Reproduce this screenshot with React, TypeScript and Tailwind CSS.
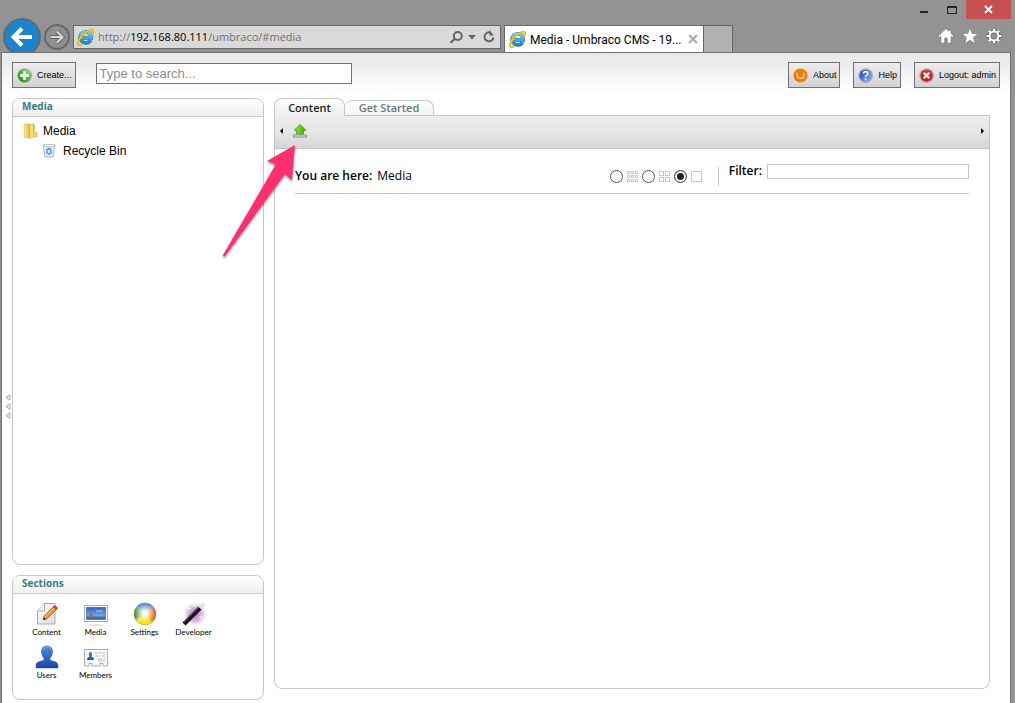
import React from 'react';

const ui = "font-['Open_Sans',sans-serif]";
const chrome = "font-['Roboto',sans-serif]";
const caption = "font-['Lato',sans-serif]";
const arial = "font-['Liberation_Sans',Arial,sans-serif]";

function Defs() {
  return (
    <svg width="0" height="0" className="absolute" aria-hidden="true">
      <defs>
        <linearGradient id="folder" x1="0" x2="1"><stop offset="0" stopColor="#fdf0a0" /><stop offset="1" stopColor="#e2ba34" /></linearGradient>
        <linearGradient id="green" x1="1" y1="0" x2="0" y2="1"><stop offset="0" stopColor="#a9dfa0" /><stop offset=".5" stopColor="#3fba2a" /><stop offset="1" stopColor="#0f8f0c" /></linearGradient>
        <linearGradient id="blue" x1="0" x2="1" y2=".8"><stop offset="0" stopColor="#1c3fb0" /><stop offset="1" stopColor="#7fa8ff" /></linearGradient>
        <radialGradient id="red" cx=".5" cy=".4"><stop offset="0" stopColor="#ff4a3a" /><stop offset="1" stopColor="#d90f12" /></radialGradient>
        <linearGradient id="silver" x2="1" y2="1"><stop offset="0" stopColor="#c9c9c9" /><stop offset="1" stopColor="#9c9c9c" /></linearGradient>
        <linearGradient id="ieblue" y2="1" x2="0"><stop offset="0" stopColor="#7fd0f8" /><stop offset="1" stopColor="#1c86d2" /></linearGradient>
        <linearGradient id="person" y2="1" x2="0"><stop offset="0" stopColor="#4f8bdd" /><stop offset="1" stopColor="#1c44a6" /></linearGradient>
        <linearGradient id="arrowup" x2="1"><stop offset="0" stopColor="#8ff01c" /><stop offset="1" stopColor="#35ad05" /></linearGradient>
        <linearGradient id="screen" y2="1" x2="0"><stop offset="0" stopColor="#2f66bd" /><stop offset="1" stopColor="#9cc3e8" /></linearGradient>
        <linearGradient id="paper" x2="1" y2="1"><stop offset="0" stopColor="#ffffff" /><stop offset="1" stopColor="#dcdcdc" /></linearGradient>
        <radialGradient id="centre"><stop offset="0" stopColor="#fff" /><stop offset=".3" stopColor="#fff" stopOpacity=".85" /><stop offset="1" stopColor="#fff" stopOpacity="0" /></radialGradient>
        <radialGradient id="purple"><stop offset="0" stopColor="#b37abf" /><stop offset=".6" stopColor="#cfa3da" stopOpacity=".8" /><stop offset="1" stopColor="#e8d4f0" stopOpacity="0" /></radialGradient>
        <clipPath id="ball"><circle cx="12" cy="12" r="11" /></clipPath>
        <filter id="soft" x="-20%" y="-20%" width="140%" height="140%"><feGaussianBlur stdDeviation="1.6" /></filter>
      </defs>
    </svg>
  );
}

function IeLogo() {
  return (
    <svg width="17" height="17" viewBox="0 0 17 17" className="shrink-0" aria-hidden="true">
      <path d="M13.6 11.2A5.6 5.6 0 1 1 14.3 8.9H4.5" fill="none" stroke="#1b78bd" strokeWidth="3.6" />
      <path d="M13.6 11.2A5.6 5.6 0 1 1 14.3 8.9H4.5" fill="none" stroke="url(#ieblue)" strokeWidth="2.6" />
      <path d="M15 5.4C16.9 1.7 15.6-.1 11.5 1.8 6.8 4 2.4 9.2 1.3 12.7.3 16.2 2.5 16.8 5.3 15" fill="none" stroke="#c98f00" strokeWidth="2" />
      <path d="M15 5.4C16.9 1.7 15.6-.1 11.5 1.8 6.8 4 2.4 9.2 1.3 12.7.3 16.2 2.5 16.8 5.3 15" fill="none" stroke="#fbcf17" strokeWidth="1.4" />
    </svg>
  );
}

function Browser() {
  return (
    <header className={`flex h-[52px] shrink-0 items-start overflow-hidden bg-[#939393] ${chrome}`}>
      <button aria-label="Back" className="ml-[3px] mt-[18px] size-[38px] shrink-0 rounded-full border-2 border-[#5d6b76] bg-[#1b84cd]">
        <svg width="34" height="34" viewBox="0 0 34 34"><path d="M27 17H9M17 8.500 8.500 17 17 25.500" fill="none" stroke="#fff" strokeWidth="4" /></svg>
      </button>
      <button aria-label="Forward" className="ml-[3px] mt-6 size-[26px] shrink-0 rounded-full border-2 border-[#686868] bg-[#8f8f8f]">
        <svg width="22" height="22" viewBox="0 0 22 22"><path d="M4 11h12M11 5.500 16.500 11 11 16.500" fill="none" stroke="#656565" strokeWidth="4" /><path d="M4.500 11h12M11 5.500 16.500 11 11 16.500" fill="none" stroke="#d6d6d6" strokeWidth="2.200" /></svg>
      </button>
      <div className="ml-[3px] mt-[25px] flex h-6 w-[428px] items-center border border-[#676767] bg-[#d9d9d9] pl-[3px] pr-1">
        <IeLogo />
        <div className={`ml-1 min-w-0 flex-1 truncate pt-px text-[11px] text-[#717171] ${ui}`}>http://<span className="text-black">192.168.80.111</span>/umbraco/#media</div>
        <button aria-label="Search"><svg width="15" height="15" viewBox="0 0 15 15"><circle cx="8.800" cy="6" r="4" fill="none" stroke="#656565" strokeWidth="2" /><path d="m6 8.800-4.500 4" stroke="#656565" strokeWidth="2.200" /></svg></button>
        <button aria-label="Search options" className="ml-1"><svg width="8" height="5" viewBox="0 0 8 5"><path d="M0 0h8L4 4.500Z" fill="#656565" /></svg></button>
        <button aria-label="Refresh" className="ml-[6px]"><svg width="14" height="14" viewBox="0 0 14 14"><path d="M11.500 7.500a4.500 4.500 0 1 1-3.300-5" fill="none" stroke="#656565" strokeWidth="2" /><path d="M7.500 0v5.500H12Z" fill="#656565" /></svg></button>
      </div>
      <div className="ml-[3px] mt-[25px] flex h-[27px] w-[200px] shrink-0 items-center border border-b-0 border-[#676767] bg-white px-1">
        <IeLogo />
        <span className="ml-1 min-w-0 flex-1 whitespace-nowrap pt-px text-[12px] text-black">Media - Umbraco CMS - 19...</span>
        <button aria-label="Close tab"><svg width="12" height="10" viewBox="0 0 12 10"><path d="m2 1 8 8M10 1 2 9" stroke="#aaa" strokeWidth="2" /></svg></button>
      </div>
      <button aria-label="New tab" className="mt-[25px] h-[27px] w-[29px] shrink-0 border border-b-0 border-l-0 border-[#676767] bg-[#b1b1b1]" />
      <div className="ml-auto flex shrink-0 flex-col items-end pr-1">
        <div className="flex h-[19px]">
          <button aria-label="Minimize" className="flex w-6 items-end justify-center pb-[6px]"><span className="h-[2px] w-2 bg-[#222]" /></button>
          <button aria-label="Maximize" className="ml-[2px] flex w-[28px] items-center justify-center"><span className="h-2 w-[10px] border border-t-2 border-[#222]" /></button>
          <button aria-label="Close" className="flex w-[45px] items-center justify-center bg-[#c75050]"><svg width="9" height="9" viewBox="0 0 9 9"><path d="m1 1 7 7M8 1 1 8" stroke="#fff" strokeWidth="1.800" /></svg></button>
        </div>
        <div className="mr-[9px] mt-[9px] flex gap-2">
          <button aria-label="Home"><svg width="16" height="16" viewBox="0 0 16 16"><path d="M8 .5.300 8l1.500 1.500 1-.9V15.200h4v-5h2.400v5h4V8.600l1 .9L15.700 8 13.200 5.500V2h-2.400v1.300Z" fill="#fff" stroke="#686868" strokeWidth=".7" /></svg></button>
          <button aria-label="Favorites"><svg width="16" height="16" viewBox="0 0 16 16"><path d="m8 0 2.200 5.500 5.800.2-4.500 3.700 1.700 6.100L8 12.200l-5.200 3.300 1.700-6.100L0 5.700l5.800-.2Z" fill="#fff" stroke="#686868" strokeWidth=".5" /></svg></button>
          <button aria-label="Settings"><svg width="16" height="16" viewBox="0 0 16 16"><g stroke="#666" strokeWidth="3.400"><path d="M8 .3v3M8 12.700v3M.3 8h3M12.700 8h3M2.600 2.600l2 2M11.400 11.400l2 2M13.400 2.600l-2 2M4.600 11.400l-2 2" /></g><circle cx="8" cy="8" r="4.500" fill="none" stroke="#666" strokeWidth="3.400" /><g stroke="#fff" strokeWidth="2.200"><path d="M8 .7v3M8 12.300v3M.7 8h3M12.300 8h3M2.800 2.800l2 2M11.200 11.200l2 2M13.200 2.800l-2 2M4.800 11.200l-2 2" /></g><circle cx="8" cy="8" r="4.400" fill="none" stroke="#fff" strokeWidth="2" /></svg></button>
        </div>
      </div>
    </header>
  );
}

function ToolButton({ label, children }: { label: string; children: React.ReactNode }) {
  return (
    <button className={`flex h-[26px] items-center gap-[5px] border border-[#707070] bg-gradient-to-b from-[#ededed] to-[#d2d2d2] pl-1 pr-[3px] text-[9px] text-black ${arial}`}>
      <svg width="15" height="15" viewBox="0 0 16 16" aria-hidden="true">{children}</svg>
      <span className="pt-px">{label}</span>
    </button>
  );
}

function PanelTitle({ children }: { children: React.ReactNode }) {
  return <h2 className={`h-[18px] shrink-0 border-b border-[#cacaca] bg-gradient-to-b from-white to-[#efefef] pl-[9px] text-[10px] font-bold leading-[15px] text-[#378080] ${ui}`}>{children}</h2>;
}

const sections: [string, React.ReactNode][] = [
  ['Content', <>
    <path d="M9.500 1.500H20v20.500H2.500V9Z" fill="url(#paper)" stroke="#a9a9a9" /><path d="M9.500 1.500V9h-7" fill="#f5f5f5" stroke="#a9a9a9" />
    <path d="m8 18 1.200-4L19 4l3 3L12 17Z" fill="#e99638" stroke="#a8601c" strokeWidth=".7" /><path d="m10 15 10-10" stroke="#ffd27f" /><path d="m18 5 2-2 3 3-2 2Z" fill="#c6404b" /><path d="m8 18 .8-3 2.200 2.200Z" fill="#333" /></>],
  ['Media', <>
    <path d="M.5 3.500h23v16H.5Z" fill="#fff" stroke="#a9a9a9" /><path d="M2.500 5.500h19v12h-19Z" fill="url(#screen)" stroke="#305496" strokeWidth=".7" /><path d="M3 14.500h18V17H3Z" fill="#3c6dae" /><path d="m4 15 2-2 1-4 1 4 3 2Z" fill="#7c7a60" /><path d="M12 9h7" stroke="#a9cdee" /><ellipse cx="12" cy="23" rx="8" ry="1" fill="#e4e4e4" /></>],
  ['Settings', <>
    <g clipPath="url(#ball)"><g filter="url(#soft)"><path d="M-3-3h30L12 12Z" fill="#4a80cc" /><path d="M27-3v18L12 12Z" fill="#d97324" /><path d="M27 12v15H15l-3-15Z" fill="#e8701c" /><path d="M-1 27h25l-12-17Z" fill="#ffe500" /><path d="M-3-1v23l15-10Z" fill="#5d9a24" /></g><circle cx="12" cy="11" r="10" fill="url(#centre)" /></g><circle cx="12" cy="12" r="11" fill="none" stroke="#597594" strokeWidth=".4" /></>],
  ['Developer', <>
    <circle cx="13" cy="12" r="12" fill="url(#purple)" /><path d="m7 3 .5 3 3 .5-3 .5-.5 3-.5-3-3-.5 3-.5ZM19 12l.5 2.500 3 .5-3 .5-.5 3-.5-3-3-.5 3-.5ZM12 2l.4 1.600 1.600.4-1.600.4L12 6l-.4-1.600L10 4l1.600-.4Z" fill="#fff" /><path d="m2 22 16-16" stroke="#171717" strokeWidth="4.500" /><path d="m2 20 16-16" stroke="#777" strokeWidth=".8" /><path d="m18 6 4-4" stroke="#e2e2e8" strokeWidth="4.500" /></>],
  ['Users', <><path d="M6.500 6C6.500-.8 17.500-.8 17.500 6c0 3.500-1 6-2.500 7.300V15c3 1.500 8 1.500 8 5v3H1v-3c0-3.500 5-3.500 8-5v-1.700C7.500 12 6.500 9.500 6.500 6Z" fill="url(#person)" stroke="#2b58b1" strokeWidth=".5" /><path d="M8.500 4.500c1-3.500 6-3.500 7 0" fill="none" stroke="#84b2ed" /></>],
  ['Members', <>
    <path d="M.5 4.500h23V21H19v-2.500h-3V21H8v-2.500H5V21H.5Z" fill="#fafafa" stroke="#a9a9a9" /><path d="M4.800 9c0-2.600 3.400-2.600 3.400 0 0 1.500-.5 2.200-.7 2.800 1.500.7 2.500.8 2.500 3.200H3c0-2.400 1-2.500 2.500-3.200C5.200 11.200 4.800 10.500 4.800 9Z" fill="url(#person)" /><path d="M11 8h3m1 0h3m1 0h2M12 11h3m1 0h1m1 0h3M14 14h4m1 0h2M14 16h4m1 0h2" stroke="#b5b5b5" /></>],
];

function Triangle() {
  return <svg width="6" height="7" viewBox="0 0 6 7"><path d="M5 .8v5.400L1 3.500Z" fill="#eee" stroke="#aaa" /></svg>;
}

function ViewGrid({ n }: { n: 1 | 2 | 3 }) {
  const size = n === 1 ? 10 : n === 2 ? 4 : 2;
  const pitch = n === 2 ? 6 : 4;
  return (
    <svg width="11" height="11" viewBox="0 0 11 11" shapeRendering="crispEdges" aria-hidden="true">
      {Array.from({ length: n * n }, (_, i) => <rect key={i} x={(i % n) * pitch + 0.5} y={Math.floor(i / n) * pitch + 0.5} width={size} height={size} fill="none" stroke="#c8c8c8" />)}
    </svg>
  );
}

export default function App() {
  return (
    <div className="relative flex min-h-screen flex-col bg-[#939393]">
      <Defs />
      <Browser />
      <div className="ml-px mr-1 flex flex-1 flex-col border border-b-0 border-[#707070] bg-white bg-[linear-gradient(#e8e8e8,#ececec_10px,#fff_40px)]">
        <div className="flex h-[45px] items-start pl-[10px] pr-[10px] pt-[9px]">
          <ToolButton label="Create...">
            <circle cx="8" cy="8" r="8" fill="url(#silver)" /><circle cx="8" cy="8" r="7" fill="url(#green)" /><path d="M8 3.500v9M3.500 8h9" stroke="#fff" strokeWidth="3" />
          </ToolButton>
          <input type="text" aria-label="Search" placeholder="Type to search..." className={`ml-5 mt-px h-[21px] w-64 border border-[#707070] bg-white px-[3px] text-[13px] outline-none placeholder:text-[#8b8b8b] ${arial}`} />
          <div className="ml-auto flex gap-[13px]">
            <ToolButton label="About"><circle cx="8" cy="8" r="7.500" fill="#f37a06" /><path d="M4.500 5v3.500q0 2.500 3.500 2.500t3.500-2.500V5" fill="none" stroke="#ffe6c8" strokeWidth="1.300" /></ToolButton>
            <ToolButton label="Help"><circle cx="8" cy="8" r="8" fill="url(#silver)" /><circle cx="8" cy="8" r="6.500" fill="url(#blue)" /><path d="M5.800 6c.3-3 5-2.700 4.700 0C10.300 7.700 8 7.500 8 9.500M8 11v2" fill="none" stroke="#fff" strokeWidth="1.700" /></ToolButton>
            <ToolButton label="Logout: admin"><circle cx="8" cy="8" r="8" fill="url(#silver)" /><circle cx="8" cy="8" r="6.500" fill="url(#red)" /><path d="m5 5 6 6M11 5l-6 6" stroke="#fff" strokeWidth="2.200" /></ToolButton>
          </div>
        </div>

        <div className="flex flex-1">
          <div className="flex w-[10px] shrink-0 flex-col items-end justify-center gap-[2px] pr-px pt-3"><Triangle /><Triangle /><Triangle /></div>
          <aside className="flex w-[252px] shrink-0 flex-col gap-[10px] pb-[3px]">
            <section className="flex flex-1 flex-col overflow-hidden rounded-lg border border-[#c6c6c6] bg-white">
              <PanelTitle>Media</PanelTitle>
              <ul className={`pl-[10px] pt-1 text-[12px] leading-5 text-black ${arial}`}>
                <li>
                  <a href="#media" className="flex items-center gap-[5px]">
                    <svg width="15" height="16" viewBox="0 0 15 16" aria-hidden="true"><path d="M1 1h5.500v13.500H1.500Z" fill="url(#folder)" stroke="#d9b548" strokeWidth=".6" /><path d="M6 2.500 10.500.8v13L7 15.500Z" fill="#f6dd74" stroke="#d0a82c" strokeWidth=".7" /><path d="M10.500 2h1.200v7l2.300 1v4h-3.500Z" fill="url(#folder)" stroke="#d0a93a" strokeWidth=".6" /></svg>
                    Media
                  </a>
                  <ul className="pl-[19px]">
                    <li>
                      <a href="#recycle" className="flex items-center gap-[7px]">
                        <svg width="14" height="14" viewBox="0 0 14 14" aria-hidden="true"><path d="m1 1 2 12h8l2-12Z" fill="#e1ebf5" stroke="#93a8bd" strokeWidth=".8" /><path d="M.5 1.500 3 .5h8l2.500 1-2 1H3Z" fill="#fff" stroke="#9bacbd" strokeWidth=".6" /><path d="m5 6 2-2 2 2v3l-2 1-2-1Z" fill="none" stroke="#3f7ee2" strokeWidth="1.400" strokeDasharray="2.500 .6" /></svg>
                        Recycle Bin
                      </a>
                    </li>
                  </ul>
                </li>
              </ul>
            </section>
            <section className="flex min-h-[125px] flex-col overflow-hidden rounded-lg border border-[#c6c6c6] bg-white">
              <PanelTitle>Sections</PanelTitle>
              <nav className="grid grid-cols-[repeat(4,49px)] gap-y-1 pl-[9px] pt-2">
                {sections.map(([name, icon]) => (
                  <a key={name} href={`#${name.toLowerCase()}`} className={`flex h-[39px] flex-col items-center text-[8px] leading-[12px] text-black ${caption}`}>
                    <svg width="24" height="24" viewBox="0 0 24 24" aria-hidden="true" className="shrink-0">{icon}</svg>
                    {name}
                  </a>
                ))}
              </nav>
            </section>
          </aside>

          <main className={`ml-[10px] mr-5 flex min-w-0 flex-1 flex-col pb-[14px] ${ui}`}>
            <div role="tablist" className="relative -mb-px flex items-end text-[11px] font-semibold">
              <button role="tab" aria-selected="true" className="h-[18px] w-[71px] rounded-t-lg border border-b-0 border-[#c6c6c6] bg-gradient-to-b from-white to-[#ededed] leading-[18px] text-[#1f1f1f]">Content</button>
              <button role="tab" aria-selected="false" className="mb-px h-[15px] w-[89px] rounded-t-lg border border-b-0 border-l-0 border-[#c6c6c6] bg-gradient-to-b from-white to-[#f4f4f4] leading-[14px] text-[#667b7b]">Get Started</button>
            </div>
            <section className="flex flex-1 flex-col rounded-b-lg border border-[#c6c6c6] bg-white">
              <div className="flex h-[33px] items-center justify-between border-b border-[#c6c6c6] bg-gradient-to-b from-[#ededed] via-[#e6e6e6] to-[#d5d5d5] px-[5px] pb-[2px]">
                <div className="flex items-center gap-[10px]">
                  <button aria-label="Scroll left"><svg width="3" height="6" viewBox="0 0 3 6"><path d="M3 0v6L0 3Z" /></svg></button>
                  <button aria-label="Upload"><svg width="14" height="14" viewBox="0 0 14 14"><path d="M.5 11h13v2H.5Z" fill="#eee" stroke="#858585" /><path d="m7 .5 6 5.800h-2.500V10h-7V6.300H1Z" fill="url(#arrowup)" stroke="#349b08" strokeWidth=".7" /></svg></button>
                </div>
                <button aria-label="Scroll right"><svg width="3" height="6" viewBox="0 0 3 6"><path d="M0 0v6l3-3Z" /></svg></button>
              </div>
              <div className="mx-5 flex h-[45px] items-center border-b border-[#c6c6c6] pt-[10px] text-[12px] text-black">
                <p><strong className="mr-[5px] font-semibold">You are here:</strong>Media</p>
                <div className="ml-auto flex items-center gap-1">
                  {([3, 2, 1] as const).map((n) => (
                    <label key={n} className="flex items-center gap-1">
                      <input type="radio" name="view" aria-label={`View with ${n} columns`} defaultChecked={n === 1} className="size-[13px] appearance-none rounded-full border border-[#555] bg-white checked:bg-[#222] checked:shadow-[inset_0_0_0_2px_white]" />
                      <ViewGrid n={n} />
                    </label>
                  ))}
                </div>
                <span className="ml-4 h-[19px] w-px bg-[#c6c6c6]" />
                <div className="mb-[10px] ml-[10px] flex items-center gap-[5px]">
                  <label htmlFor="filter" className="font-semibold">Filter:</label>
                  <input id="filter" type="text" className="h-[15px] w-[202px] border border-[#c6c6c6] bg-white px-1 text-[11px] outline-none" />
                </div>
              </div>
            </section>
          </main>
        </div>
      </div>

      <svg width="82" height="120" viewBox="0 0 82 120" className="pointer-events-none absolute left-[218px] top-[142px] drop-shadow-[0_2px_1px_rgba(0,0,0,0.4)]" aria-hidden="true">
        <path d="M77 3 49 19l9 3L5 113q0 2 2 1l60-82 7 6Z" fill="#ff2f6e" />
      </svg>
    </div>
  );
}
